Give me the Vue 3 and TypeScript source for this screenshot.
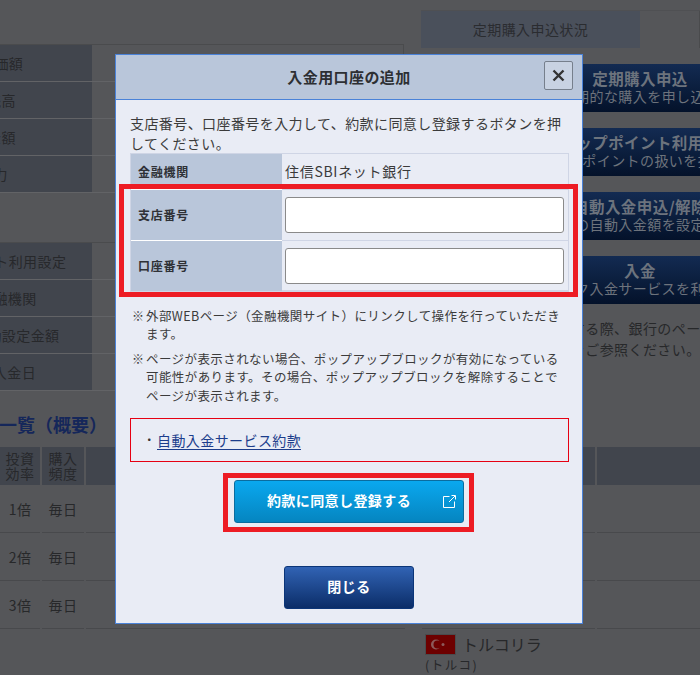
<script setup lang="ts">
interface Row { label: string; offset: number }
const summaryRows: Row[] = [
  { label: '評価額', offset: -20 },
  { label: '残高', offset: -13 },
  { label: '金額', offset: -13 },
  { label: '効力', offset: -21 },
]
const settingRows: Row[] = [
  { label: 'ポイント利用設定', offset: -49 },
  { label: '金融機関', offset: -21 },
  { label: '自動設定金額', offset: -27 },
  { label: '次回入金日', offset: -36 },
]
const sideButtons = [
  { title: '定期購入申込', sub: '定期的な購入を申し込む' },
  { title: 'ステップポイント利用設定', sub: 'ステップポイントの扱いを指定する' },
  { title: '自動入金申込/解除', sub: '毎月の自動入金額を設定する' },
  { title: '入金', sub: 'クイック入金サービスを利用する' },
]
const dataRows = ['1倍', '2倍', '3倍']
const labelShift = (n: number) => ({ marginLeft: `${n}px` })
</script>

<template>
  <div class="page">
    <div class="top">
      <div class="left">
        <div class="info-table">
          <div v-for="r in summaryRows" :key="r.label" class="info-row">
            <div class="info-label"><span :style="labelShift(r.offset)">{{ r.label }}</span></div>
            <div class="info-value"></div>
          </div>
        </div>
        <div class="info-table second">
          <div v-for="r in settingRows" :key="r.label" class="info-row">
            <div class="info-label"><span :style="labelShift(r.offset)">{{ r.label }}</span></div>
            <div class="info-value"></div>
          </div>
        </div>
      </div>
      <div class="right">
        <div class="tabs">
          <div class="tab-active">定期購入申込状況</div>
          <div class="tab-rest"></div>
        </div>
        <div v-for="b in sideButtons" :key="b.title" class="side-btn">
          <div class="side-title">{{ b.title }}</div>
          <div class="side-sub">{{ b.sub }}</div>
        </div>
        <p class="side-note">入金する際、銀行のページを<br />詳細をご参照ください。</p>
      </div>
    </div>

    <h2 class="list-heading">一覧（概要）</h2>
    <div class="list">
      <div class="list-head">投資<br />効率</div>
      <div class="list-head">購入<br />頻度</div>
      <div class="list-head"></div>
      <div class="list-head"></div>
      <div class="list-head"></div>
      <div class="list-head"></div>
      <template v-for="d in dataRows" :key="d">
        <div class="list-cell">{{ d }}</div>
        <div class="list-cell">毎日</div>
        <div class="list-cell"></div>
        <div class="list-spacer"></div>
        <div class="list-cell"></div>
        <div class="list-cell"></div>
      </template>
      <div class="currency">
        <div class="currency-main">
          <svg class="flag" width="31" height="21" viewBox="0 0 31 21">
            <rect x="0.5" y="0.5" width="30" height="20" fill="#6d0000" stroke="#4a4b4d" />
            <circle cx="11" cy="10.5" r="5" fill="#8c5a5a" />
            <circle cx="12.5" cy="10.5" r="4" fill="#6d0000" />
            <circle cx="18" cy="10.5" r="1.5" fill="#8c5a5a" />
          </svg>
          <span>トルコリラ</span>
        </div>
        <div class="currency-sub">(トルコ)</div>
      </div>
    </div>

    <section class="modal">
      <header class="modal-head">
        <h1 class="modal-title">入金用口座の追加</h1>
        <button class="close-x" type="button" aria-label="閉じる">
          <svg width="13" height="13" viewBox="0 0 13 13">
            <path d="M1.5 1.5L11.5 11.5M11.5 1.5L1.5 11.5" stroke="#333" stroke-width="2.4" fill="none" />
          </svg>
        </button>
      </header>
      <div class="modal-body">
        <p class="intro">支店番号、口座番号を入力して、約款に同意し登録するボタンを押<br />してください。</p>
        <div class="form-table">
          <div class="form-row first">
            <div class="form-label">金融機関</div>
            <div class="form-value">住信SBIネット銀行</div>
          </div>
          <div class="form-row">
            <div class="form-label">支店番号</div>
            <div class="form-value"><input class="field" type="text" /></div>
          </div>
          <div class="form-row">
            <div class="form-label">口座番号</div>
            <div class="form-value"><input class="field" type="text" /></div>
          </div>
          <div class="form-frame"></div>
        </div>
        <div class="note note-a"><span>※</span><p>外部WEBページ（金融機関サイト）にリンクして操作を行っていただき<br />ます。</p></div>
        <div class="note note-b"><span>※</span><p>ページが表示されない場合、ポップアップブロックが有効になっている<br />可能性があります。その場合、ポップアップブロックを解除することで<br />ページが表示されます。</p></div>
        <div class="terms"><span class="dot">・</span><a class="terms-link">自動入金サービス約款</a></div>
        <div class="agree-frame">
          <button class="agree" type="button">
            <span>約款に同意し登録する</span>
            <svg class="ext" width="13" height="13" viewBox="0 0 13 13">
              <path d="M6.5 1.5H0.5V12.5H11.5V6.5" stroke="#fff" fill="none" />
              <path d="M6 7L12 1M8.5 0.5H12.5V4.5" stroke="#fff" fill="none" />
            </svg>
          </button>
        </div>
        <button class="close-btn" type="button">閉じる</button>
      </div>
    </section>
  </div>
</template>

<style>
html, body { margin: 0; padding: 0; background: #555659; }
</style>

<style scoped>
.page {
  position: relative;
  width: 700px;
  height: 675px;
  overflow: hidden;
  background: #555659;
  color: #2b2c2e;
  font-family: "Noto Sans CJK JP", "Noto Sans", sans-serif;
  font-size: 14px;
  letter-spacing: 0.03em;
}
.top { display: flex; gap: 17px; height: 392px; }
.left { width: 404px; flex: none; padding-top: 44px; box-sizing: border-box; }
.info-table { border-top: 1px solid #4a4b4d; border-right: 1px solid #4a4b4d; }
.info-table.second { margin-top: 49px; }
.info-row { display: flex; height: 37px; border-bottom: 1px solid #626366; box-sizing: border-box; }
.info-label {
  width: 92px;
  flex: none;
  display: flex;
  align-items: center;
  background: #41454d;
  overflow: hidden;
  white-space: nowrap;
  color: #27282b;
  padding-bottom: 1px;
  box-sizing: border-box;
}
.info-label span { flex: none; }
.info-value { flex: 1; }
.right { flex: 1; min-width: 0; padding-top: 10px; overflow: hidden; }
.tabs { display: flex; height: 38px; border-top: 1px solid #4f5053; box-sizing: border-box; }
.tab-active {
  width: 219px;
  background: #4a505b;
  display: flex;
  align-items: center;
  justify-content: center;
  color: #2a2c30;
  font-size: 14px;
  padding-bottom: 2px;
  box-sizing: border-box;
}
.tab-rest { flex: 1; border-right: 1px solid #4a4b4d; }
.side-btn {
  width: 438px;
  height: 48px;
  margin-top: 16px;
  padding-bottom: 3px;
  box-sizing: border-box;
  background: linear-gradient(#132b52, #04122a);
  border-radius: 3px;
  text-align: center;
  display: flex;
  flex-direction: column;
  justify-content: center;
  white-space: nowrap;
}
.side-title { color: #6c737d; font-weight: 700; font-size: 15.5px; line-height: 20px; }
.side-sub { color: #6d737c; font-size: 14px; line-height: 17px; }
.side-note {
  margin: 14px 0 0;
  padding-left: 121px;
  width: 440px;
  box-sizing: border-box;
  line-height: 21px;
  font-size: 14px;
  white-space: nowrap;
  color: #27282a;
}
.list-heading {
  margin: 19px 0 0 -1px;
  height: 36px;
  font-size: 18px;
  line-height: 26px;
  font-weight: 700;
  color: #15275a;
  letter-spacing: 0;
}
.list { display: grid; grid-template-columns: 40px 42px 319px 13px 173px 103px; column-gap: 2px; }
.list-head {
  height: 38px;
  background: #41454d;
  display: flex;
  align-items: center;
  justify-content: center;
  text-align: center;
  line-height: 15px;
  font-size: 14px;
  color: #27282b;
}
.list-cell {
  height: 47px;
  border-bottom: 1px solid #48494c;
  display: flex;
  align-items: center;
  justify-content: center;
  color: #27282a;
}
.currency { grid-column: 5; padding: 5px 0 0 3px; }
.currency-main { display: flex; align-items: center; gap: 6px; font-size: 16px; height: 20px; letter-spacing: 0; color: #27282a; }
.flag { flex: none; }
.currency-sub { font-size: 12.5px; line-height: 21px; color: #27282a; letter-spacing: 0.12em; }

.modal {
  position: absolute;
  left: 115px;
  top: 54px;
  width: 468px;
  height: 570px;
  box-sizing: border-box;
  background: #e9ecf5;
  border: 1px solid #4a82d8;
  color: #333;
}
.modal-head {
  position: relative;
  height: 45px;
  padding-bottom: 1px;
  box-sizing: border-box;
  background: #b9c6da;
  border-bottom: 1px solid #4a82d8;
  display: flex;
  align-items: center;
  justify-content: center;
}
.modal-title { margin: 0; font-size: 15px; font-weight: 700; color: #2d2f33; line-height: 22px; }
.close-x {
  position: absolute;
  right: 9px;
  top: 6px;
  width: 29px;
  height: 29px;
  padding: 0;
  background: #c8d2e2;
  border: 1px solid #767f8c;
  border-radius: 2px;
  display: flex;
  align-items: center;
  justify-content: center;
}
.modal-body { padding: 13px 13px 0 14px; }
.intro { margin: 0; line-height: 20px; font-size: 14px; white-space: nowrap; color: #3b3b3b; }
.form-table {
  position: relative;
  border: 1px solid #cfd5e5;
  border-bottom-width: 2px;
  box-sizing: border-box;
  height: 139px;
}
.form-row { display: grid; grid-template-columns: 151px 1fr; height: 51px; border-top: 1px solid #cfd5e5; box-sizing: border-box; }
.form-row.first { height: 35px; border-top: 0; }
.form-label {
  background: #b9c6da;
  display: flex;
  align-items: center;
  padding: 0 0 1px 7px;
  font-size: 12px;
  font-weight: 700;
  letter-spacing: 0.06em;
  color: #2f3136;
  border-top: 1px solid #fff;
  margin-top: -1px;
}
.first .form-label { border-top: 0; margin-top: 0; }
.form-value { display: flex; align-items: center; padding: 0 4px 0 3px; font-size: 14px; letter-spacing: 0.05em; color: #3a3a3a; }
.first .form-value { padding-bottom: 2px; }
.field {
  display: block;
  width: 100%;
  height: 36px;
  box-sizing: border-box;
  background: #fff;
  border: 1px solid #8a8a8a;
  border-radius: 3px;
  padding: 0;
}
.form-frame {
  position: absolute;
  left: -12px;
  right: -10px;
  top: 30px;
  height: 113px;
  box-sizing: border-box;
  border: 5px solid #ed1c24;
}
.note { display: flex; font-size: 12.5px; line-height: 18.4px; color: #3b3b3b; white-space: nowrap; padding-left: 2px; }
.note span { width: 14px; flex: none; font-size: 12px; }
.note p { margin: 0; }
.note-a { margin-top: 15px; }
.note-b { margin-top: 6px; }
.terms {
  margin-top: 13px;
  height: 44px;
  box-sizing: border-box;
  border: 1px solid #e60012;
  display: flex;
  align-items: center;
  padding: 0 0 1px 11px;
  font-size: 14px;
}
.dot { width: 15px; flex: none; text-align: center; font-size: 12px; }
.terms-link {
  color: #1c3d8c;
  border-bottom: 1px solid #1c3d8c;
  line-height: 18px;
  margin-top: 1px;
}
.agree-frame {
  width: 251px;
  height: 59px;
  margin: 11px 0 0 93px;
  box-sizing: border-box;
  border: 5px solid #ed1c24;
  padding: 2px 0 0 6px;
}
.agree {
  position: relative;
  display: flex;
  align-items: center;
  justify-content: center;
  width: 230px;
  height: 43px;
  padding: 0 20px 3px 0;
  box-sizing: border-box;
  background: linear-gradient(#0aa8ef, #0585c0);
  border: 1px solid #0a6c9f;
  border-radius: 3px;
  color: #fff;
  font: inherit;
  font-weight: 700;
  font-size: 14px;
  letter-spacing: 0.03em;
}
.ext { position: absolute; right: 7px; top: 14px; }
.close-btn {
  display: block;
  width: 130px;
  height: 43px;
  margin: 34px 0 0 154px;
  background: linear-gradient(#3163b4, #0b2d68);
  border: 1px solid #0b3578;
  border-radius: 3px;
  color: #fff;
  font: inherit;
  font-weight: 700;
  font-size: 14px;
  letter-spacing: 0.03em;
  padding: 0 0 3px;
}
</style>
